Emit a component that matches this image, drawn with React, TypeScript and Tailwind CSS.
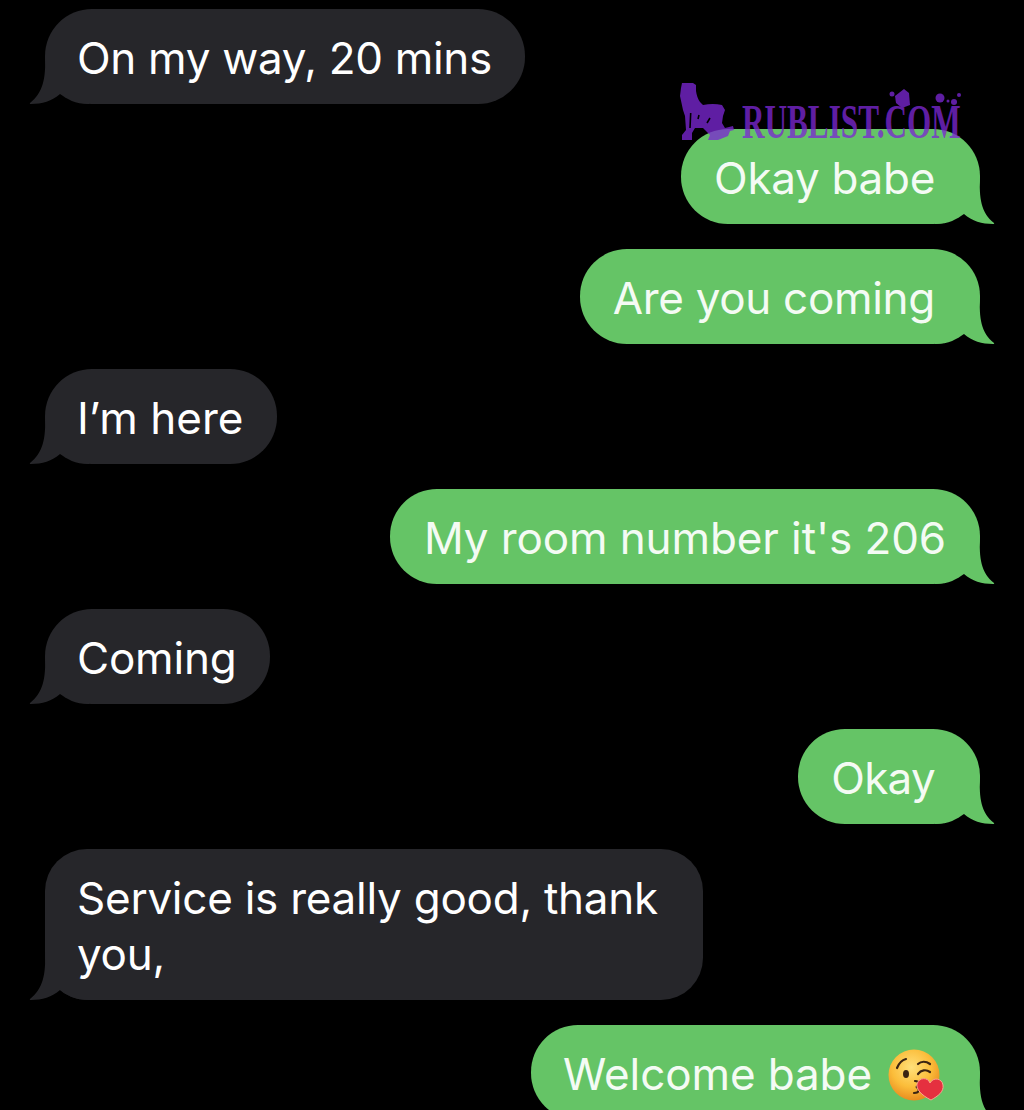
const Tail = ({ side, color }: { side: "left" | "right"; color: string }) =>
  side === "left" ? (
    <svg className="absolute left-[-16px] bottom-0" width="60" height="48" viewBox="0 0 60 48">
      <path d="M16 0 C17 22 14 37 1 47 C0.5 47.6 1 48 2 48 C13 48 23 45 31 38 C38 43 46 48 60 48 L60 0 Z" fill={color} />
    </svg>
  ) : (
    <svg className="absolute right-[-15px] bottom-0" width="60" height="48" viewBox="0 0 60 48">
      <path d="M45 0 C44 22 46 37 59 47 C59.5 47.6 59 48 58 48 C47 48 37 45 29 38 C22 43 14 48 0 48 L0 0 Z" fill={color} />
    </svg>
  )

const Bubble = ({ side, className, children }: { side: "left" | "right"; className: string; children: React.ReactNode }) => (
  <div
    className={`relative pt-[21px] pb-[18px] rounded-[47px] leading-[56px] text-[44px] ${
      side === "left" ? "self-start bg-[#26262a] text-white" : "self-end bg-[#65c466] text-[#f4fbf4]"
    } ${className}`}
  >
    <span className="relative z-10">{children}</span>
    <Tail side={side} color={side === "left" ? "#26262a" : "#65c466"} />
  </div>
)

const KissEmoji = () => (
  <svg className="inline-block align-middle ml-[16px] mt-[-6px]" width="56" height="52" viewBox="0 0 56 52">
    <defs>
      <radialGradient id="face" cx="0.45" cy="0.35" r="0.7">
        <stop offset="0" stopColor="#ffe07a" />
        <stop offset="0.55" stopColor="#fbbd3a" />
        <stop offset="1" stopColor="#e5831a" />
      </radialGradient>
    </defs>
    <circle cx="26" cy="26" r="25.5" fill="url(#face)" />
    <path d="M9 19 C11 14 14 11 18 10" stroke="#3b2412" strokeWidth="2.2" fill="none" strokeLinecap="round" />
    <ellipse cx="18" cy="25" rx="3" ry="4" fill="#3b2412" />
    <path d="M30 15 C33 12 38 12 42 15" stroke="#3b2412" strokeWidth="2.2" fill="none" strokeLinecap="round" />
    <path d="M30 25 C33 21 38 20 42 23" stroke="#3b2412" strokeWidth="2.2" fill="none" strokeLinecap="round" />
    <path d="M27 32 C32 32 32 37 28 38 C32 39 32 44 26 44" stroke="#3b2412" strokeWidth="2.2" fill="none" strokeLinecap="round" />
    <path d="M43 51 C33 46 28 40 29 35 C31 28 40 28 42 34 C45 28 54 29 55 36 C56 43 50 47 43 51 Z" fill="#e5303f" stroke="#f7a58f" strokeWidth="1" />
  </svg>
)

const Watermark = () => (
  <div className="absolute left-[680px] top-[83px] w-[285px] h-[60px] opacity-[0.77] text-[#7c28d4]">
    <svg className="absolute left-0 top-0" width="56" height="60" viewBox="0 0 56 60">
      <path
        d="M2 0 L13 0 L16 2 L16 8 Q17 15 20 19 L23 22 Q33 20 42 22 L45 27 L43 33 L42 40 L45 45 L53 43 L54 47 L50 48 L48 53 L38 57 L28 57 L30 52 L23 45 L15 45 L12 50 L12 57 L2 57 L2 52 L6 47 L5 33 L3 27 L0 13 L1 5 Z"
        fill="currentColor"
      />
      <path d="M10.7 30 L10 45 M19 32 L18 36 M30 35 L27 40" stroke="#000" strokeWidth="1.6" fill="none" />
    </svg>
    <span className="absolute left-[62px] top-[15px] origin-left scale-x-[0.65] whitespace-nowrap font-['Liberation_Serif',serif] font-bold text-[48px] leading-[48px]">
      RUBLIST.COM
    </span>
    <svg className="absolute left-[200px] top-[5px]" width="85" height="30" viewBox="0 0 85 30">
      <path d="M15 8 L24 1 L29 5 L30 17 L22 20 L16 15 Z" fill="currentColor" />
      <circle cx="12" cy="6" r="2.5" fill="currentColor" />
      <circle cx="60" cy="10" r="4.5" fill="currentColor" />
      <circle cx="68" cy="13" r="1.5" fill="currentColor" />
      <circle cx="74" cy="14" r="3" fill="currentColor" />
      <circle cx="79" cy="7" r="2" fill="currentColor" />
    </svg>
  </div>
)

export default function App() {
  return (
    <div className="relative h-[1110px] overflow-hidden bg-black font-['Inter',sans-serif]">
      <div className="flex flex-col gap-[25px] pt-[9px] pl-[45px] pr-[44px]">
        <Bubble side="left" className="pl-[32px] pr-[33px] tracking-[-0.3px]">On my way, 20 mins</Bubble>
        <Bubble side="right" className="pl-[33px] pr-[45px] tracking-[-0.3px]">Okay babe</Bubble>
        <Bubble side="right" className="pl-[33px] pr-[45px] tracking-[-0.3px]">Are you coming</Bubble>
        <Bubble side="left" className="pl-[32px] pr-[34px] tracking-normal">I’m here</Bubble>
        <Bubble side="right" className="px-[34px] tracking-[-0.1px]">My room number it's 206</Bubble>
        <Bubble side="left" className="pl-[32px] pr-[33px] tracking-[-0.2px]">Coming</Bubble>
        <Bubble side="right" className="pl-[33px] pr-[45px] tracking-[-0.7px]">Okay</Bubble>
        <Bubble side="left" className="pl-[32px] pr-[45px] tracking-[-0.25px] !rounded-[42px]">
          Service is really good, thank
          <br />
          you,
        </Bubble>
        <Bubble side="right" className="pl-[32px] pr-[36px] tracking-[-0.1px]">
          Welcome babe
          <KissEmoji />
        </Bubble>
      </div>
      <Watermark />
    </div>
  )
}
